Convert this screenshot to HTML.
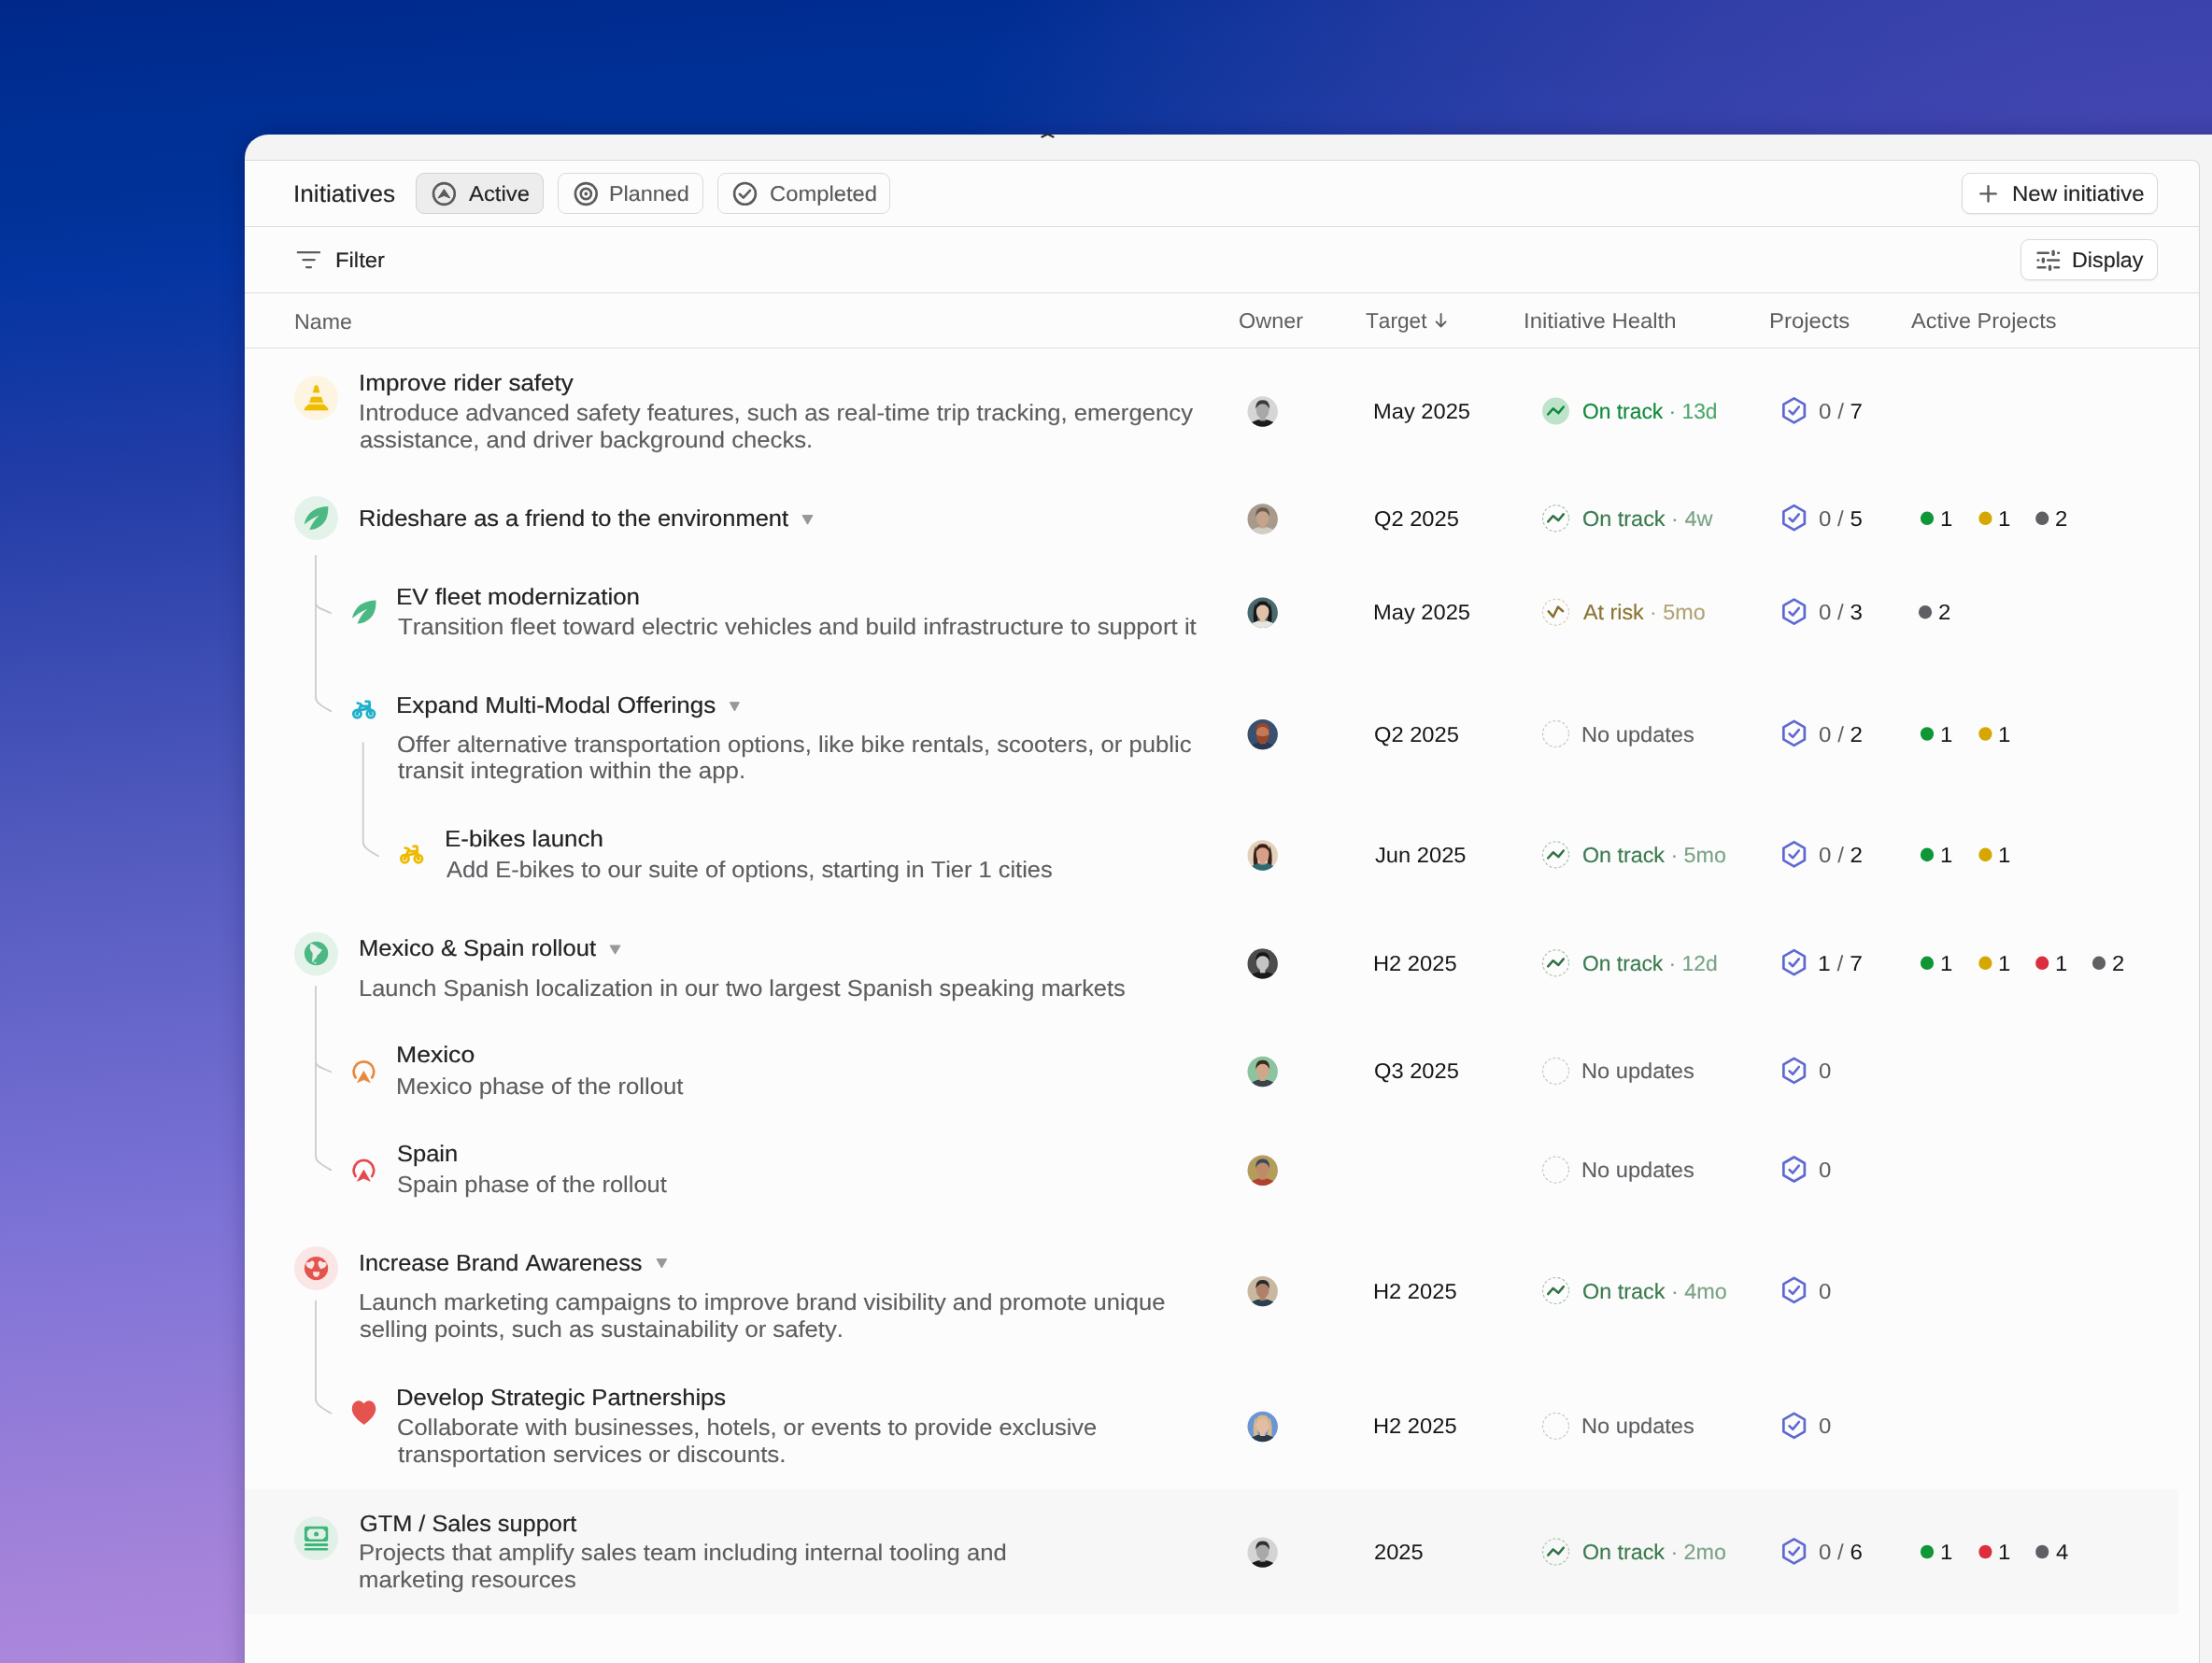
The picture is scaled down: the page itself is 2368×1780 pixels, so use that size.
<!DOCTYPE html>
<html><head><meta charset="utf-8"><style>
html,body{margin:0;padding:0;}
body{width:2368px;height:1780px;overflow:hidden;position:relative;background:radial-gradient(1400px 900px at 2400px 300px, rgba(84,74,180,0.85) 0%, rgba(84,74,180,0.72) 30%, rgba(84,74,180,0.6) 50%, rgba(84,74,180,0.4) 70%, rgba(84,74,180,0.14) 90%, rgba(84,74,180,0) 100%), linear-gradient(175deg, #00288a 0%, #003096 7.7%, #003196 10.5%, #0535a2 15.6%, #213ca6 25.6%, #525abe 45.7%, #7c72d6 65.9%, #a684da 86%, #b890e0 100%);font-family:"Liberation Sans",sans-serif;}
.t{position:absolute;white-space:pre;line-height:1;font-kerning:none;font-variant-ligatures:none;text-rendering:geometricPrecision;}
#root{position:absolute;left:0;top:0;width:2368px;height:1780px;overflow:hidden;will-change:transform;}
svg{position:absolute;left:0;top:0;}
</style></head><body><div id="root">
<div style="position:absolute;left:262px;top:144px;width:2200px;height:1800px;background:#f4f4f4;border-top-left-radius:25px;box-shadow:0 0 24px rgba(10,10,60,0.28)"></div>
<div style="position:absolute;left:262px;top:171px;width:2092px;height:1700px;background:#fcfcfc;border-top:1px solid #d8d8d8;border-right:1px solid #d6d6d6;border-top-right-radius:8px"></div>
<div style="position:absolute;left:262px;top:242px;width:2092px;height:1px;background:#dedede"></div>
<div style="position:absolute;left:262px;top:313px;width:2092px;height:1px;background:#dedede"></div>
<div style="position:absolute;left:262px;top:372px;width:2092px;height:1px;background:#dedede"></div>
<div style="position:absolute;left:262px;top:1593.7px;width:2070px;height:134px;background:#f7f7f7"></div>
<div class="t" style="left:314.38px;top:196.00px;font-size:25.4px;color:#232326;letter-spacing:0.000px;transform:scaleX(1.0310);transform-origin:0 0;-webkit-text-stroke:0.15px currentColor;">Initiatives</div>
<div style="position:absolute;left:445px;top:185px;width:137px;height:44px;box-sizing:border-box;background:#ededed;border:1.5px solid #d2d2d2;border-radius:9px;"></div>
<div style="position:absolute;left:597px;top:185px;width:156px;height:44px;box-sizing:border-box;background:#fcfcfc;border:1.5px solid #dadada;border-radius:9px;"></div>
<div style="position:absolute;left:768px;top:185px;width:185px;height:44px;box-sizing:border-box;background:#fcfcfc;border:1.5px solid #dadada;border-radius:9px;"></div>
<div style="position:absolute;left:2100px;top:185px;width:210px;height:43.5px;box-sizing:border-box;background:#ffffff;border:1.5px solid #d9d9d9;border-radius:9px;box-shadow:0 1px 2px rgba(0,0,0,0.06)"></div>
<div style="position:absolute;left:2163px;top:256px;width:147px;height:43.5px;box-sizing:border-box;background:#ffffff;border:1.5px solid #d9d9d9;border-radius:9px;box-shadow:0 1px 2px rgba(0,0,0,0.06)"></div>
<div class="t" style="left:502.25px;top:196.00px;font-size:22.8px;color:#232326;letter-spacing:0.000px;transform:scaleX(1.0470);transform-origin:0 0;-webkit-text-stroke:0.15px currentColor;">Active</div>
<div class="t" style="left:652.28px;top:196.00px;font-size:22.8px;color:#5a5a5d;letter-spacing:0.000px;transform:scaleX(1.0257);transform-origin:0 0;-webkit-text-stroke:0.15px currentColor;">Planned</div>
<div class="t" style="left:823.79px;top:196.00px;font-size:22.8px;color:#5a5a5d;letter-spacing:0.000px;transform:scaleX(1.0424);transform-origin:0 0;-webkit-text-stroke:0.15px currentColor;">Completed</div>
<div class="t" style="left:2153.83px;top:196.00px;font-size:23px;color:#232326;letter-spacing:0.000px;transform:scaleX(1.0446);transform-origin:0 0;-webkit-text-stroke:0.15px currentColor;">New initiative</div>
<div class="t" style="left:359.25px;top:267.00px;font-size:22.7px;color:#232326;letter-spacing:0.000px;transform:scaleX(1.0497);transform-origin:0 0;-webkit-text-stroke:0.15px currentColor;">Filter</div>
<div class="t" style="left:2217.89px;top:267.00px;font-size:23px;color:#232326;letter-spacing:0.000px;transform:scaleX(1.0139);transform-origin:0 0;-webkit-text-stroke:0.15px currentColor;">Display</div>
<div class="t" style="left:315.30px;top:333.00px;font-size:22.8px;color:#5e5e62;letter-spacing:0.000px;transform:scaleX(1.0167);transform-origin:0 0;">Name</div>
<div class="t" style="left:1326.29px;top:332.00px;font-size:22.8px;color:#5e5e62;letter-spacing:0.000px;transform:scaleX(1.0275);transform-origin:0 0;">Owner</div>
<div class="t" style="left:1462.49px;top:332.00px;font-size:22.8px;color:#5e5e62;letter-spacing:0.000px;transform:scaleX(0.9936);transform-origin:0 0;">Target</div>
<div class="t" style="left:1630.89px;top:332.00px;font-size:22.8px;color:#5e5e62;letter-spacing:0.000px;transform:scaleX(1.0493);transform-origin:0 0;">Initiative Health</div>
<div class="t" style="left:1894.34px;top:332.00px;font-size:22.8px;color:#5e5e62;letter-spacing:0.000px;transform:scaleX(1.0481);transform-origin:0 0;">Projects</div>
<div class="t" style="left:2045.95px;top:332.00px;font-size:22.8px;color:#5e5e62;letter-spacing:0.000px;transform:scaleX(1.0313);transform-origin:0 0;">Active Projects</div>
<div class="t" style="left:383.60px;top:399.00px;font-size:24.5px;color:#232326;letter-spacing:0.000px;transform:scaleX(1.0612);transform-origin:0 0;-webkit-text-stroke:0.2px currentColor;">Improve rider safety</div>
<div class="t" style="left:383.63px;top:431.00px;font-size:24.5px;color:#5d5d60;letter-spacing:0.000px;transform:scaleX(1.0492);transform-origin:0 0;-webkit-text-stroke:0.12px currentColor;">Introduce advanced safety features, such as real-time trip tracking, emergency</div>
<div class="t" style="left:384.91px;top:460.00px;font-size:24.5px;color:#5d5d60;letter-spacing:0.000px;transform:scaleX(1.0480);transform-origin:0 0;-webkit-text-stroke:0.12px currentColor;">assistance, and driver background checks.</div>
<div class="t" style="left:1470.06px;top:429.00px;font-size:23.0px;color:#161618;letter-spacing:0.000px;transform:scaleX(1.0300);transform-origin:0 0;">May 2025</div>
<div class="t" style="left:1694.22px;top:429.00px;font-size:23.0px;color:#0f8a3b;letter-spacing:0.000px;transform:scaleX(0.9919);transform-origin:0 0;-webkit-text-stroke:0.15px currentColor;"><span style="color:#0f8a3b">On track</span><span style="color:#4ea86c"> · 13d</span></div>
<div class="t" style="left:1946.66px;top:429.00px;font-size:23.0px;color:#5e5e62;letter-spacing:0.000px;transform:scaleX(1.0492);transform-origin:0 0;"><span style="color:#5e5e62">0</span><span style="color:#5e5e62"> / </span><span style="color:#161618">7</span></div>
<div class="t" style="left:383.91px;top:544.00px;font-size:24.5px;color:#232326;letter-spacing:0.000px;transform:scaleX(1.0394);transform-origin:0 0;-webkit-text-stroke:0.2px currentColor;">Rideshare as a friend to the environment</div>
<div class="t" style="left:1470.88px;top:544.00px;font-size:23.0px;color:#161618;letter-spacing:0.000px;transform:scaleX(1.0300);transform-origin:0 0;">Q2 2025</div>
<div class="t" style="left:1694.19px;top:544.00px;font-size:23.0px;color:#3a7a4e;letter-spacing:0.000px;transform:scaleX(1.0190);transform-origin:0 0;-webkit-text-stroke:0.15px currentColor;"><span style="color:#3a7a4e">On track</span><span style="color:#7aa386"> · 4w</span></div>
<div class="t" style="left:1946.66px;top:544.00px;font-size:23.0px;color:#5e5e62;letter-spacing:0.000px;transform:scaleX(1.0446);transform-origin:0 0;"><span style="color:#5e5e62">0</span><span style="color:#5e5e62"> / </span><span style="color:#161618">5</span></div>
<div class="t" style="left:2076.58px;top:544.00px;font-size:23.0px;color:#161618;letter-spacing:0.000px;transform:scaleX(1.0400);transform-origin:0 0;">1</div>
<div class="t" style="left:2138.98px;top:544.00px;font-size:23.0px;color:#161618;letter-spacing:0.000px;transform:scaleX(1.0400);transform-origin:0 0;">1</div>
<div class="t" style="left:2200.40px;top:544.00px;font-size:23.0px;color:#161618;letter-spacing:0.000px;transform:scaleX(1.0400);transform-origin:0 0;">2</div>
<div class="t" style="left:423.97px;top:628.00px;font-size:24.5px;color:#232326;letter-spacing:0.000px;transform:scaleX(1.0589);transform-origin:0 0;-webkit-text-stroke:0.2px currentColor;">EV fleet modernization</div>
<div class="t" style="left:425.52px;top:660.00px;font-size:24.5px;color:#5d5d60;letter-spacing:0.000px;transform:scaleX(1.0532);transform-origin:0 0;-webkit-text-stroke:0.12px currentColor;">Transition fleet toward electric vehicles and build infrastructure to support it</div>
<div class="t" style="left:1470.06px;top:644.00px;font-size:23.0px;color:#161618;letter-spacing:0.000px;transform:scaleX(1.0300);transform-origin:0 0;">May 2025</div>
<div class="t" style="left:1695.25px;top:644.00px;font-size:23.0px;color:#8a7434;letter-spacing:0.000px;transform:scaleX(1.0120);transform-origin:0 0;-webkit-text-stroke:0.15px currentColor;"><span style="color:#8a7434">At risk</span><span style="color:#b2a375"> · 5mo</span></div>
<div class="t" style="left:1946.66px;top:644.00px;font-size:23.0px;color:#5e5e62;letter-spacing:0.000px;transform:scaleX(1.0456);transform-origin:0 0;"><span style="color:#5e5e62">0</span><span style="color:#5e5e62"> / </span><span style="color:#161618">3</span></div>
<div class="t" style="left:2075.20px;top:644.00px;font-size:23.0px;color:#161618;letter-spacing:0.000px;transform:scaleX(1.0400);transform-origin:0 0;">2</div>
<div class="t" style="left:423.97px;top:744.00px;font-size:24.5px;color:#232326;letter-spacing:0.000px;transform:scaleX(1.0603);transform-origin:0 0;-webkit-text-stroke:0.2px currentColor;">Expand Multi-Modal Offerings</div>
<div class="t" style="left:424.88px;top:786.00px;font-size:24.5px;color:#5d5d60;letter-spacing:0.000px;transform:scaleX(1.0479);transform-origin:0 0;-webkit-text-stroke:0.12px currentColor;">Offer alternative transportation options, like bike rentals, scooters, or public</div>
<div class="t" style="left:425.71px;top:814.00px;font-size:24.5px;color:#5d5d60;letter-spacing:0.000px;transform:scaleX(1.0550);transform-origin:0 0;-webkit-text-stroke:0.12px currentColor;">transit integration within the app.</div>
<div class="t" style="left:1470.88px;top:775.00px;font-size:23.0px;color:#161618;letter-spacing:0.000px;transform:scaleX(1.0300);transform-origin:0 0;">Q2 2025</div>
<div class="t" style="left:1693.36px;top:775.00px;font-size:23.0px;color:#5e5e62;letter-spacing:0.000px;transform:scaleX(1.0268);transform-origin:0 0;-webkit-text-stroke:0.1px currentColor;">No updates</div>
<div class="t" style="left:1946.66px;top:775.00px;font-size:23.0px;color:#5e5e62;letter-spacing:0.000px;transform:scaleX(1.0492);transform-origin:0 0;"><span style="color:#5e5e62">0</span><span style="color:#5e5e62"> / </span><span style="color:#161618">2</span></div>
<div class="t" style="left:2076.58px;top:775.00px;font-size:23.0px;color:#161618;letter-spacing:0.000px;transform:scaleX(1.0400);transform-origin:0 0;">1</div>
<div class="t" style="left:2138.98px;top:775.00px;font-size:23.0px;color:#161618;letter-spacing:0.000px;transform:scaleX(1.0400);transform-origin:0 0;">1</div>
<div class="t" style="left:475.58px;top:887.00px;font-size:24.5px;color:#232326;letter-spacing:0.000px;transform:scaleX(1.0567);transform-origin:0 0;-webkit-text-stroke:0.2px currentColor;">E-bikes launch</div>
<div class="t" style="left:477.65px;top:920.00px;font-size:24.5px;color:#5d5d60;letter-spacing:0.000px;transform:scaleX(1.0378);transform-origin:0 0;-webkit-text-stroke:0.12px currentColor;">Add E-bikes to our suite of options, starting in Tier 1 cities</div>
<div class="t" style="left:1471.63px;top:904.00px;font-size:23.0px;color:#161618;letter-spacing:0.000px;transform:scaleX(1.0300);transform-origin:0 0;">Jun 2025</div>
<div class="t" style="left:1694.20px;top:904.00px;font-size:23.0px;color:#3a7a4e;letter-spacing:0.000px;transform:scaleX(1.0117);transform-origin:0 0;-webkit-text-stroke:0.15px currentColor;"><span style="color:#3a7a4e">On track</span><span style="color:#7aa386"> · 5mo</span></div>
<div class="t" style="left:1946.66px;top:904.00px;font-size:23.0px;color:#5e5e62;letter-spacing:0.000px;transform:scaleX(1.0492);transform-origin:0 0;"><span style="color:#5e5e62">0</span><span style="color:#5e5e62"> / </span><span style="color:#161618">2</span></div>
<div class="t" style="left:2076.58px;top:904.00px;font-size:23.0px;color:#161618;letter-spacing:0.000px;transform:scaleX(1.0400);transform-origin:0 0;">1</div>
<div class="t" style="left:2138.98px;top:904.00px;font-size:23.0px;color:#161618;letter-spacing:0.000px;transform:scaleX(1.0400);transform-origin:0 0;">1</div>
<div class="t" style="left:383.91px;top:1004.00px;font-size:24.5px;color:#232326;letter-spacing:0.000px;transform:scaleX(1.0419);transform-origin:0 0;-webkit-text-stroke:0.2px currentColor;">Mexico &amp; Spain rollout</div>
<div class="t" style="left:383.92px;top:1047.00px;font-size:24.5px;color:#5d5d60;letter-spacing:0.000px;transform:scaleX(1.0373);transform-origin:0 0;-webkit-text-stroke:0.12px currentColor;">Launch Spanish localization in our two largest Spanish speaking markets</div>
<div class="t" style="left:1470.06px;top:1020.00px;font-size:23.0px;color:#161618;letter-spacing:0.000px;transform:scaleX(1.0300);transform-origin:0 0;">H2 2025</div>
<div class="t" style="left:1694.22px;top:1020.00px;font-size:23.0px;color:#3a7a4e;letter-spacing:0.000px;transform:scaleX(0.9926);transform-origin:0 0;-webkit-text-stroke:0.15px currentColor;"><span style="color:#3a7a4e">On track</span><span style="color:#7aa386"> · 12d</span></div>
<div class="t" style="left:1945.72px;top:1020.00px;font-size:23.0px;color:#161618;letter-spacing:0.000px;transform:scaleX(1.0706);transform-origin:0 0;"><span style="color:#161618">1</span><span style="color:#5e5e62"> / </span><span style="color:#161618">7</span></div>
<div class="t" style="left:2076.58px;top:1020.00px;font-size:23.0px;color:#161618;letter-spacing:0.000px;transform:scaleX(1.0400);transform-origin:0 0;">1</div>
<div class="t" style="left:2138.98px;top:1020.00px;font-size:23.0px;color:#161618;letter-spacing:0.000px;transform:scaleX(1.0400);transform-origin:0 0;">1</div>
<div class="t" style="left:2199.78px;top:1020.00px;font-size:23.0px;color:#161618;letter-spacing:0.000px;transform:scaleX(1.0400);transform-origin:0 0;">1</div>
<div class="t" style="left:2261.20px;top:1020.00px;font-size:23.0px;color:#161618;letter-spacing:0.000px;transform:scaleX(1.0400);transform-origin:0 0;">2</div>
<div class="t" style="left:423.92px;top:1118.00px;font-size:24.5px;color:#232326;letter-spacing:0.000px;transform:scaleX(1.0850);transform-origin:0 0;-webkit-text-stroke:0.2px currentColor;">Mexico</div>
<div class="t" style="left:423.99px;top:1152.00px;font-size:24.5px;color:#5d5d60;letter-spacing:0.000px;transform:scaleX(1.0502);transform-origin:0 0;-webkit-text-stroke:0.12px currentColor;">Mexico phase of the rollout</div>
<div class="t" style="left:1470.88px;top:1135.00px;font-size:23.0px;color:#161618;letter-spacing:0.000px;transform:scaleX(1.0300);transform-origin:0 0;">Q3 2025</div>
<div class="t" style="left:1693.36px;top:1135.00px;font-size:23.0px;color:#5e5e62;letter-spacing:0.000px;transform:scaleX(1.0268);transform-origin:0 0;-webkit-text-stroke:0.1px currentColor;">No updates</div>
<div class="t" style="left:1946.66px;top:1135.00px;font-size:23.0px;color:#5e5e62;letter-spacing:0.000px;transform:scaleX(1.0450);transform-origin:0 0;">0</div>
<div class="t" style="left:424.94px;top:1224.00px;font-size:24.5px;color:#232326;letter-spacing:0.000px;transform:scaleX(1.0407);transform-origin:0 0;-webkit-text-stroke:0.2px currentColor;">Spain</div>
<div class="t" style="left:424.94px;top:1257.00px;font-size:24.5px;color:#5d5d60;letter-spacing:0.000px;transform:scaleX(1.0395);transform-origin:0 0;-webkit-text-stroke:0.12px currentColor;">Spain phase of the rollout</div>
<div class="t" style="left:1693.36px;top:1241.00px;font-size:23.0px;color:#5e5e62;letter-spacing:0.000px;transform:scaleX(1.0268);transform-origin:0 0;-webkit-text-stroke:0.1px currentColor;">No updates</div>
<div class="t" style="left:1946.66px;top:1241.00px;font-size:23.0px;color:#5e5e62;letter-spacing:0.000px;transform:scaleX(1.0450);transform-origin:0 0;">0</div>
<div class="t" style="left:383.67px;top:1341.00px;font-size:24.5px;color:#232326;letter-spacing:0.000px;transform:scaleX(1.0316);transform-origin:0 0;-webkit-text-stroke:0.2px currentColor;">Increase Brand Awareness</div>
<div class="t" style="left:383.90px;top:1383.00px;font-size:24.5px;color:#5d5d60;letter-spacing:0.000px;transform:scaleX(1.0445);transform-origin:0 0;-webkit-text-stroke:0.12px currentColor;">Launch marketing campaigns to improve brand visibility and promote unique</div>
<div class="t" style="left:385.29px;top:1412.00px;font-size:24.5px;color:#5d5d60;letter-spacing:0.000px;transform:scaleX(1.0478);transform-origin:0 0;-webkit-text-stroke:0.12px currentColor;">selling points, such as sustainability or safety.</div>
<div class="t" style="left:1470.06px;top:1371.00px;font-size:23.0px;color:#161618;letter-spacing:0.000px;transform:scaleX(1.0300);transform-origin:0 0;">H2 2025</div>
<div class="t" style="left:1694.19px;top:1371.00px;font-size:23.0px;color:#3a7a4e;letter-spacing:0.000px;transform:scaleX(1.0177);transform-origin:0 0;-webkit-text-stroke:0.15px currentColor;"><span style="color:#3a7a4e">On track</span><span style="color:#7aa386"> · 4mo</span></div>
<div class="t" style="left:1946.66px;top:1371.00px;font-size:23.0px;color:#5e5e62;letter-spacing:0.000px;transform:scaleX(1.0450);transform-origin:0 0;">0</div>
<div class="t" style="left:424.30px;top:1485.00px;font-size:24.5px;color:#232326;letter-spacing:0.000px;transform:scaleX(1.0456);transform-origin:0 0;-webkit-text-stroke:0.2px currentColor;">Develop Strategic Partnerships</div>
<div class="t" style="left:425.11px;top:1517.00px;font-size:24.5px;color:#5d5d60;letter-spacing:0.000px;transform:scaleX(1.0400);transform-origin:0 0;-webkit-text-stroke:0.12px currentColor;">Collaborate with businesses, hotels, or events to provide exclusive</div>
<div class="t" style="left:426.01px;top:1546.00px;font-size:24.5px;color:#5d5d60;letter-spacing:0.000px;transform:scaleX(1.0596);transform-origin:0 0;-webkit-text-stroke:0.12px currentColor;">transportation services or discounts.</div>
<div class="t" style="left:1470.06px;top:1515.00px;font-size:23.0px;color:#161618;letter-spacing:0.000px;transform:scaleX(1.0300);transform-origin:0 0;">H2 2025</div>
<div class="t" style="left:1693.36px;top:1515.00px;font-size:23.0px;color:#5e5e62;letter-spacing:0.000px;transform:scaleX(1.0268);transform-origin:0 0;-webkit-text-stroke:0.1px currentColor;">No updates</div>
<div class="t" style="left:1946.66px;top:1515.00px;font-size:23.0px;color:#5e5e62;letter-spacing:0.000px;transform:scaleX(1.0450);transform-origin:0 0;">0</div>
<div class="t" style="left:384.73px;top:1620.00px;font-size:24.5px;color:#232326;letter-spacing:0.000px;transform:scaleX(1.0343);transform-origin:0 0;-webkit-text-stroke:0.2px currentColor;">GTM / Sales support</div>
<div class="t" style="left:383.90px;top:1651.00px;font-size:24.5px;color:#5d5d60;letter-spacing:0.000px;transform:scaleX(1.0460);transform-origin:0 0;-webkit-text-stroke:0.12px currentColor;">Projects that amplify sales team including internal tooling and</div>
<div class="t" style="left:384.29px;top:1680.00px;font-size:24.5px;color:#5d5d60;letter-spacing:0.000px;transform:scaleX(1.0486);transform-origin:0 0;-webkit-text-stroke:0.12px currentColor;">marketing resources</div>
<div class="t" style="left:1470.81px;top:1650.00px;font-size:23.0px;color:#161618;letter-spacing:0.000px;transform:scaleX(1.0300);transform-origin:0 0;">2025</div>
<div class="t" style="left:1694.20px;top:1650.00px;font-size:23.0px;color:#3a7a4e;letter-spacing:0.000px;transform:scaleX(1.0117);transform-origin:0 0;-webkit-text-stroke:0.15px currentColor;"><span style="color:#3a7a4e">On track</span><span style="color:#7aa386"> · 2mo</span></div>
<div class="t" style="left:1946.66px;top:1650.00px;font-size:23.0px;color:#5e5e62;letter-spacing:0.000px;transform:scaleX(1.0456);transform-origin:0 0;"><span style="color:#5e5e62">0</span><span style="color:#5e5e62"> / </span><span style="color:#161618">6</span></div>
<div class="t" style="left:2076.58px;top:1650.00px;font-size:23.0px;color:#161618;letter-spacing:0.000px;transform:scaleX(1.0400);transform-origin:0 0;">1</div>
<div class="t" style="left:2138.98px;top:1650.00px;font-size:23.0px;color:#161618;letter-spacing:0.000px;transform:scaleX(1.0400);transform-origin:0 0;">1</div>
<div class="t" style="left:2201.05px;top:1650.00px;font-size:23.0px;color:#161618;letter-spacing:0.000px;transform:scaleX(1.0400);transform-origin:0 0;">4</div>
<svg width="2368" height="1780" viewBox="0 0 2368 1780">
<circle cx="475.4" cy="207.5" r="11.4" fill="none" stroke="#5c5c5f" stroke-width="2.6"/>
<path d="M475.4,202.6 L481.8,212 L475.4,209.4 L469,212 Z" fill="#5c5c5f" stroke="#5c5c5f" stroke-width="1" stroke-linejoin="round"/>
<circle cx="627.3" cy="207.5" r="11.4" fill="none" stroke="#5c5c5f" stroke-width="2.6"/>
<circle cx="627.3" cy="207.5" r="5.6" fill="none" stroke="#5c5c5f" stroke-width="2.6"/>
<circle cx="627.3" cy="207.5" r="1.9" fill="#5c5c5f"/>
<circle cx="797.5" cy="207.4" r="11.4" fill="none" stroke="#5c5c5f" stroke-width="2.6"/>
<path d="M791.8,207.8 L795.8,211.6 L803,203.8" fill="none" stroke="#5c5c5f" stroke-width="2.6" stroke-linecap="round" stroke-linejoin="round"/>
<path d="M2128.5,199.2 V215.6 M2120.3,207.4 H2136.7" stroke="#5c5c5f" stroke-width="2.4" stroke-linecap="round"/>
<path d="M318.8,270.2 H342 M324.5,278.2 H336.6 M328,286.1 H333" stroke="#5c5c5f" stroke-width="2.3" stroke-linecap="round"/>
<path d="M2181.6,270.7 H2192.8 M2203.2,270.7 H2204 M2181.6,278.4 H2182.2 M2192.2,278.4 H2204 M2181.6,286.2 H2189.5 M2199.5,286.2 H2204" stroke="#5c5c5f" stroke-width="2.5" stroke-linecap="round"/>
<path d="M2198.1,269.2 V272.4 M2187.3,277.2 V280 M2194.5,285.2 V288.3" stroke="#5c5c5f" stroke-width="3.4" stroke-linecap="round"/>
<path d="M1115.5,146.5 L1121.5,143.6 L1127.5,146.5" fill="none" stroke="#2a2a2a" stroke-width="2.2" stroke-linecap="round"/>
<path d="M1542.6,336 V349.5 M1537.6,344.4 L1542.6,349.5 L1547.6,344.4" fill="none" stroke="#5e5e62" stroke-width="1.9" stroke-linecap="round" stroke-linejoin="round"/>
<clipPath id="av0"><circle cx="1351.7" cy="440.5" r="16.2"/></clipPath><g clip-path="url(#av0)"><rect x="1334.7" y="423.5" width="34" height="34" fill="#d6d6d6"/><ellipse cx="1351.7" cy="457.5" rx="15" ry="8.5" fill="#1c1c1c"/><rect x="1348.9" y="444.5" width="5.6" height="6" fill="#a8a8a8"/><ellipse cx="1351.7" cy="439.3" rx="6.8" ry="8.6" fill="#a8a8a8"/><path d="M1344.3,438.0 Q1343.9,428.0 1351.7,428.3 Q1359.5,428.0 1359.1000000000001,438.0 Q1356.7,432.3 1351.7,432.3 Q1346.7,432.3 1344.3,438.0 Z" fill="#3a3a3a"/></g>
<circle cx="1665.5" cy="439.9" r="14.5" fill="#bfe3ca"/>
<path d="M1657.2,443.5 L1662.7,437.29999999999995 L1668.3,442.09999999999997 L1673.8,435.5" fill="none" stroke="#0b8a3b" stroke-width="2.5" stroke-linecap="round" stroke-linejoin="round"/>
<polygon points="1920.60,426.30 1931.86,432.80 1931.86,445.80 1920.60,452.30 1909.34,445.80 1909.34,432.80" fill="none" stroke="#5e6ad2" stroke-width="2.7" stroke-linejoin="round"/>
<path d="M1915.6,439.9 L1919.1999999999998,443.29999999999995 L1925.8,435.49999999999994" fill="none" stroke="#5e6ad2" stroke-width="2.6" stroke-linecap="round" stroke-linejoin="round"/>
<path d="M859,551.6 L870,551.6 L864.5,561.2 Z" fill="#98989b" stroke="#98989b" stroke-width="1" stroke-linejoin="round"/>
<clipPath id="av1"><circle cx="1351.7" cy="555.4" r="16.2"/></clipPath><g clip-path="url(#av1)"><rect x="1334.7" y="538.4" width="34" height="34" fill="#a89a8a"/><ellipse cx="1351.7" cy="572.4" rx="15" ry="8.5" fill="#d2cec6"/><rect x="1348.9" y="559.4" width="5.6" height="6" fill="#c4a48c"/><ellipse cx="1351.7" cy="554.1999999999999" rx="6.8" ry="8.6" fill="#c4a48c"/><path d="M1344.3,552.9 Q1343.9,542.9 1351.7,543.1999999999999 Q1359.5,542.9 1359.1000000000001,552.9 Q1356.7,547.1999999999999 1351.7,547.1999999999999 Q1346.7,547.1999999999999 1344.3,552.9 Z" fill="#6a5a4e"/></g>
<circle cx="1665.5" cy="554.8" r="14" fill="none" stroke="#a8c4ae" stroke-width="1.2" stroke-dasharray="3 2.2"/>
<path d="M1657.2,558.4 L1662.7,552.1999999999999 L1668.3,557.0 L1673.8,550.4" fill="none" stroke="#2f7145" stroke-width="2.5" stroke-linecap="round" stroke-linejoin="round"/>
<polygon points="1920.60,541.20 1931.86,547.70 1931.86,560.70 1920.60,567.20 1909.34,560.70 1909.34,547.70" fill="none" stroke="#5e6ad2" stroke-width="2.7" stroke-linejoin="round"/>
<path d="M1915.6,554.8 L1919.1999999999998,558.1999999999999 L1925.8,550.4" fill="none" stroke="#5e6ad2" stroke-width="2.6" stroke-linecap="round" stroke-linejoin="round"/>
<ellipse cx="2063" cy="554.8" rx="7.1" ry="7.3" fill="#0e9637"/>
<ellipse cx="2125.4" cy="554.8" rx="7.1" ry="7.3" fill="#d5a700"/>
<ellipse cx="2186.2" cy="554.8" rx="7.1" ry="7.3" fill="#606064"/>
<clipPath id="av2"><circle cx="1351.7" cy="655.8000000000001" r="16.2"/></clipPath><g clip-path="url(#av2)"><rect x="1334.7" y="638.8000000000001" width="34" height="34" fill="#4a686e"/><path d="M1342.2,666.8000000000001 Q1340.7,652.8000000000001 1344.2,645.8000000000001 L1346.7,664.8000000000001 Z M1361.2,666.8000000000001 Q1362.7,652.8000000000001 1359.2,645.8000000000001 L1356.7,664.8000000000001 Z" fill="#161616"/><ellipse cx="1351.7" cy="672.8000000000001" rx="15" ry="8.5" fill="#e8e4de"/><rect x="1348.9" y="659.8000000000001" width="5.6" height="6" fill="#e0c2aa"/><ellipse cx="1351.7" cy="654.6" rx="6.8" ry="8.6" fill="#e0c2aa"/><path d="M1344.3,653.3000000000001 Q1343.9,643.3000000000001 1351.7,643.6 Q1359.5,643.3000000000001 1359.1000000000001,653.3000000000001 Q1356.7,647.6 1351.7,647.6 Q1346.7,647.6 1344.3,653.3000000000001 Z" fill="#161616"/></g>
<circle cx="1665.5" cy="655.2" r="14" fill="none" stroke="#dccfae" stroke-width="1.2" stroke-dasharray="3 2.2"/>
<path d="M1657.7,654.4000000000001 L1662.7,660.2 L1667.9,649.6 L1673.1,654.2" fill="none" stroke="#85702f" stroke-width="2.5" stroke-linecap="round" stroke-linejoin="round"/>
<polygon points="1920.60,641.60 1931.86,648.10 1931.86,661.10 1920.60,667.60 1909.34,661.10 1909.34,648.10" fill="none" stroke="#5e6ad2" stroke-width="2.7" stroke-linejoin="round"/>
<path d="M1915.6,655.2 L1919.1999999999998,658.6 L1925.8,650.8000000000001" fill="none" stroke="#5e6ad2" stroke-width="2.6" stroke-linecap="round" stroke-linejoin="round"/>
<ellipse cx="2061" cy="655.2" rx="7.1" ry="7.3" fill="#606064"/>
<path d="M781.4,751.8 L791.4,751.8 L786.4,761 Z" fill="#98989b" stroke="#98989b" stroke-width="1" stroke-linejoin="round"/>
<clipPath id="av3"><circle cx="1351.7" cy="786.1" r="16.2"/></clipPath><g clip-path="url(#av3)"><rect x="1334.7" y="769.1" width="34" height="34" fill="#3a5070"/><ellipse cx="1351.7" cy="803.1" rx="15" ry="8.5" fill="#2a3a55"/><rect x="1348.9" y="790.1" width="5.6" height="6" fill="#c07a58"/><ellipse cx="1351.7" cy="784.9" rx="6.8" ry="8.6" fill="#c07a58"/><path d="M1344.9,786.6 Q1345.2,795.6 1351.7,796.1 Q1358.2,795.6 1358.5,786.6 Q1351.7,790.1 1344.9,786.6 Z" fill="#9a4628"/><path d="M1344.3,783.6 Q1343.9,773.6 1351.7,773.9 Q1359.5,773.6 1359.1000000000001,783.6 Q1356.7,777.9 1351.7,777.9 Q1346.7,777.9 1344.3,783.6 Z" fill="#9a4628"/></g>
<circle cx="1665.5" cy="785.5" r="14" fill="none" stroke="#c6c6c8" stroke-width="1.2" stroke-dasharray="3 2.2"/>
<polygon points="1920.60,771.90 1931.86,778.40 1931.86,791.40 1920.60,797.90 1909.34,791.40 1909.34,778.40" fill="none" stroke="#5e6ad2" stroke-width="2.7" stroke-linejoin="round"/>
<path d="M1915.6,785.5 L1919.1999999999998,788.9 L1925.8,781.1" fill="none" stroke="#5e6ad2" stroke-width="2.6" stroke-linecap="round" stroke-linejoin="round"/>
<ellipse cx="2063" cy="785.5" rx="7.1" ry="7.3" fill="#0e9637"/>
<ellipse cx="2125.4" cy="785.5" rx="7.1" ry="7.3" fill="#d5a700"/>
<clipPath id="av4"><circle cx="1351.7" cy="915.5" r="16.2"/></clipPath><g clip-path="url(#av4)"><rect x="1334.7" y="898.5" width="34" height="34" fill="#e2d2ba"/><path d="M1342.2,926.5 Q1340.7,912.5 1344.2,905.5 L1346.7,924.5 Z M1361.2,926.5 Q1362.7,912.5 1359.2,905.5 L1356.7,924.5 Z" fill="#3a2018"/><ellipse cx="1351.7" cy="932.5" rx="15" ry="8.5" fill="#2a6a70"/><rect x="1348.9" y="919.5" width="5.6" height="6" fill="#d6a088"/><ellipse cx="1351.7" cy="914.3" rx="6.8" ry="8.6" fill="#d6a088"/><path d="M1344.3,913.0 Q1343.9,903.0 1351.7,903.3 Q1359.5,903.0 1359.1000000000001,913.0 Q1356.7,907.3 1351.7,907.3 Q1346.7,907.3 1344.3,913.0 Z" fill="#3a2018"/></g>
<circle cx="1665.5" cy="914.9" r="14" fill="none" stroke="#a8c4ae" stroke-width="1.2" stroke-dasharray="3 2.2"/>
<path d="M1657.2,918.5 L1662.7,912.3 L1668.3,917.1 L1673.8,910.5" fill="none" stroke="#2f7145" stroke-width="2.5" stroke-linecap="round" stroke-linejoin="round"/>
<polygon points="1920.60,901.30 1931.86,907.80 1931.86,920.80 1920.60,927.30 1909.34,920.80 1909.34,907.80" fill="none" stroke="#5e6ad2" stroke-width="2.7" stroke-linejoin="round"/>
<path d="M1915.6,914.9 L1919.1999999999998,918.3 L1925.8,910.5" fill="none" stroke="#5e6ad2" stroke-width="2.6" stroke-linecap="round" stroke-linejoin="round"/>
<ellipse cx="2063" cy="914.9" rx="7.1" ry="7.3" fill="#0e9637"/>
<ellipse cx="2125.4" cy="914.9" rx="7.1" ry="7.3" fill="#d5a700"/>
<path d="M653,1012 L664,1012 L658.5,1021.2 Z" fill="#98989b" stroke="#98989b" stroke-width="1" stroke-linejoin="round"/>
<clipPath id="av5"><circle cx="1351.7" cy="1031.3999999999999" r="16.2"/></clipPath><g clip-path="url(#av5)"><rect x="1334.7" y="1014.3999999999999" width="34" height="34" fill="#4c4c4c"/><ellipse cx="1351.7" cy="1048.3999999999999" rx="15" ry="8.5" fill="#1a1a1a"/><rect x="1348.9" y="1035.3999999999999" width="5.6" height="6" fill="#c4c4c4"/><ellipse cx="1351.7" cy="1030.1999999999998" rx="6.8" ry="8.6" fill="#c4c4c4"/><path d="M1344.3,1028.8999999999999 Q1343.9,1018.8999999999999 1351.7,1019.1999999999998 Q1359.5,1018.8999999999999 1359.1000000000001,1028.8999999999999 Q1356.7,1023.1999999999998 1351.7,1023.1999999999998 Q1346.7,1023.1999999999998 1344.3,1028.8999999999999 Z" fill="#161616"/></g>
<circle cx="1665.5" cy="1030.8" r="14" fill="none" stroke="#a8c4ae" stroke-width="1.2" stroke-dasharray="3 2.2"/>
<path d="M1657.2,1034.3999999999999 L1662.7,1028.2 L1668.3,1033.0 L1673.8,1026.3999999999999" fill="none" stroke="#2f7145" stroke-width="2.5" stroke-linecap="round" stroke-linejoin="round"/>
<polygon points="1920.60,1017.20 1931.86,1023.70 1931.86,1036.70 1920.60,1043.20 1909.34,1036.70 1909.34,1023.70" fill="none" stroke="#5e6ad2" stroke-width="2.7" stroke-linejoin="round"/>
<path d="M1915.6,1030.8 L1919.1999999999998,1034.2 L1925.8,1026.4" fill="none" stroke="#5e6ad2" stroke-width="2.6" stroke-linecap="round" stroke-linejoin="round"/>
<ellipse cx="2063" cy="1030.8" rx="7.1" ry="7.3" fill="#0e9637"/>
<ellipse cx="2125.4" cy="1030.8" rx="7.1" ry="7.3" fill="#d5a700"/>
<ellipse cx="2186.2" cy="1030.8" rx="7.1" ry="7.3" fill="#dc2e3c"/>
<ellipse cx="2247" cy="1030.8" rx="7.1" ry="7.3" fill="#606064"/>
<clipPath id="av6"><circle cx="1351.7" cy="1147.0" r="16.2"/></clipPath><g clip-path="url(#av6)"><rect x="1334.7" y="1130.0" width="34" height="34" fill="#8cc4a0"/><ellipse cx="1351.7" cy="1164.0" rx="15" ry="8.5" fill="#3c424a"/><rect x="1348.9" y="1151.0" width="5.6" height="6" fill="#d2a688"/><ellipse cx="1351.7" cy="1145.8" rx="6.8" ry="8.6" fill="#d2a688"/><path d="M1344.3,1144.5 Q1343.9,1134.5 1351.7,1134.8 Q1359.5,1134.5 1359.1000000000001,1144.5 Q1356.7,1138.8 1351.7,1138.8 Q1346.7,1138.8 1344.3,1144.5 Z" fill="#3a2a20"/></g>
<circle cx="1665.5" cy="1146.4" r="14" fill="none" stroke="#c6c6c8" stroke-width="1.2" stroke-dasharray="3 2.2"/>
<polygon points="1920.60,1132.80 1931.86,1139.30 1931.86,1152.30 1920.60,1158.80 1909.34,1152.30 1909.34,1139.30" fill="none" stroke="#5e6ad2" stroke-width="2.7" stroke-linejoin="round"/>
<path d="M1915.6,1146.4 L1919.1999999999998,1149.8000000000002 L1925.8,1142.0000000000002" fill="none" stroke="#5e6ad2" stroke-width="2.6" stroke-linecap="round" stroke-linejoin="round"/>
<clipPath id="av7"><circle cx="1351.7" cy="1252.6999999999998" r="16.2"/></clipPath><g clip-path="url(#av7)"><rect x="1334.7" y="1235.6999999999998" width="34" height="34" fill="#b49c5c"/><ellipse cx="1351.7" cy="1269.6999999999998" rx="15" ry="8.5" fill="#b04030"/><rect x="1348.9" y="1256.6999999999998" width="5.6" height="6" fill="#c08a6a"/><ellipse cx="1351.7" cy="1251.4999999999998" rx="6.8" ry="8.6" fill="#c08a6a"/><path d="M1344.3,1250.1999999999998 Q1343.9,1240.1999999999998 1351.7,1240.4999999999998 Q1359.5,1240.1999999999998 1359.1000000000001,1250.1999999999998 Q1356.7,1244.4999999999998 1351.7,1244.4999999999998 Q1346.7,1244.4999999999998 1344.3,1250.1999999999998 Z" fill="#3a4a5a"/></g>
<circle cx="1665.5" cy="1252.1" r="14" fill="none" stroke="#c6c6c8" stroke-width="1.2" stroke-dasharray="3 2.2"/>
<polygon points="1920.60,1238.50 1931.86,1245.00 1931.86,1258.00 1920.60,1264.50 1909.34,1258.00 1909.34,1245.00" fill="none" stroke="#5e6ad2" stroke-width="2.7" stroke-linejoin="round"/>
<path d="M1915.6,1252.1 L1919.1999999999998,1255.5 L1925.8,1247.7" fill="none" stroke="#5e6ad2" stroke-width="2.6" stroke-linecap="round" stroke-linejoin="round"/>
<path d="M703,1347.6 L713.7,1347.6 L708.4,1357 Z" fill="#98989b" stroke="#98989b" stroke-width="1" stroke-linejoin="round"/>
<clipPath id="av8"><circle cx="1351.7" cy="1382.1" r="16.2"/></clipPath><g clip-path="url(#av8)"><rect x="1334.7" y="1365.1" width="34" height="34" fill="#c8b8a0"/><ellipse cx="1351.7" cy="1399.1" rx="15" ry="8.5" fill="#2a4050"/><rect x="1348.9" y="1386.1" width="5.6" height="6" fill="#b08068"/><ellipse cx="1351.7" cy="1380.8999999999999" rx="6.8" ry="8.6" fill="#b08068"/><path d="M1344.3,1379.6 Q1343.9,1369.6 1351.7,1369.8999999999999 Q1359.5,1369.6 1359.1000000000001,1379.6 Q1356.7,1373.8999999999999 1351.7,1373.8999999999999 Q1346.7,1373.8999999999999 1344.3,1379.6 Z" fill="#2a2a2a"/></g>
<circle cx="1665.5" cy="1381.5" r="14" fill="none" stroke="#a8c4ae" stroke-width="1.2" stroke-dasharray="3 2.2"/>
<path d="M1657.2,1385.1 L1662.7,1378.9 L1668.3,1383.7 L1673.8,1377.1" fill="none" stroke="#2f7145" stroke-width="2.5" stroke-linecap="round" stroke-linejoin="round"/>
<polygon points="1920.60,1367.90 1931.86,1374.40 1931.86,1387.40 1920.60,1393.90 1909.34,1387.40 1909.34,1374.40" fill="none" stroke="#5e6ad2" stroke-width="2.7" stroke-linejoin="round"/>
<path d="M1915.6,1381.5 L1919.1999999999998,1384.9 L1925.8,1377.1000000000001" fill="none" stroke="#5e6ad2" stroke-width="2.6" stroke-linecap="round" stroke-linejoin="round"/>
<clipPath id="av9"><circle cx="1351.7" cy="1527.0" r="16.2"/></clipPath><g clip-path="url(#av9)"><rect x="1334.7" y="1510.0" width="34" height="34" fill="#6a96d4"/><path d="M1342.2,1538.0 Q1340.7,1524.0 1344.2,1517.0 L1346.7,1536.0 Z M1361.2,1538.0 Q1362.7,1524.0 1359.2,1517.0 L1356.7,1536.0 Z" fill="#d8b888"/><ellipse cx="1351.7" cy="1544.0" rx="15" ry="8.5" fill="#2a3a48"/><rect x="1348.9" y="1531.0" width="5.6" height="6" fill="#e2bca4"/><ellipse cx="1351.7" cy="1525.8" rx="6.8" ry="8.6" fill="#e2bca4"/><path d="M1344.3,1524.5 Q1343.9,1514.5 1351.7,1514.8 Q1359.5,1514.5 1359.1000000000001,1524.5 Q1356.7,1518.8 1351.7,1518.8 Q1346.7,1518.8 1344.3,1524.5 Z" fill="#d8b888"/></g>
<circle cx="1665.5" cy="1526.4" r="14" fill="none" stroke="#c6c6c8" stroke-width="1.2" stroke-dasharray="3 2.2"/>
<polygon points="1920.60,1512.80 1931.86,1519.30 1931.86,1532.30 1920.60,1538.80 1909.34,1532.30 1909.34,1519.30" fill="none" stroke="#5e6ad2" stroke-width="2.7" stroke-linejoin="round"/>
<path d="M1915.6,1526.4 L1919.1999999999998,1529.8000000000002 L1925.8,1522.0000000000002" fill="none" stroke="#5e6ad2" stroke-width="2.6" stroke-linecap="round" stroke-linejoin="round"/>
<clipPath id="av10"><circle cx="1351.7" cy="1661.6" r="16.2"/></clipPath><g clip-path="url(#av10)"><rect x="1334.7" y="1644.6" width="34" height="34" fill="#d4d4d4"/><ellipse cx="1351.7" cy="1678.6" rx="15" ry="8.5" fill="#1a1a1a"/><rect x="1348.9" y="1665.6" width="5.6" height="6" fill="#a8a8a8"/><ellipse cx="1351.7" cy="1660.3999999999999" rx="6.8" ry="8.6" fill="#a8a8a8"/><path d="M1344.3,1659.1 Q1343.9,1649.1 1351.7,1649.3999999999999 Q1359.5,1649.1 1359.1000000000001,1659.1 Q1356.7,1653.3999999999999 1351.7,1653.3999999999999 Q1346.7,1653.3999999999999 1344.3,1659.1 Z" fill="#303030"/></g>
<circle cx="1665.5" cy="1661" r="14" fill="none" stroke="#a8c4ae" stroke-width="1.2" stroke-dasharray="3 2.2"/>
<path d="M1657.2,1664.6 L1662.7,1658.4 L1668.3,1663.2 L1673.8,1656.6" fill="none" stroke="#2f7145" stroke-width="2.5" stroke-linecap="round" stroke-linejoin="round"/>
<polygon points="1920.60,1647.40 1931.86,1653.90 1931.86,1666.90 1920.60,1673.40 1909.34,1666.90 1909.34,1653.90" fill="none" stroke="#5e6ad2" stroke-width="2.7" stroke-linejoin="round"/>
<path d="M1915.6,1661.0 L1919.1999999999998,1664.4 L1925.8,1656.6000000000001" fill="none" stroke="#5e6ad2" stroke-width="2.6" stroke-linecap="round" stroke-linejoin="round"/>
<ellipse cx="2063" cy="1661" rx="7.1" ry="7.3" fill="#0e9637"/>
<ellipse cx="2125.4" cy="1661" rx="7.1" ry="7.3" fill="#dc2e3c"/>
<ellipse cx="2186.2" cy="1661" rx="7.1" ry="7.3" fill="#606064"/>
<circle cx="338.5" cy="426" r="23.5" fill="#fdf4e2"/>
<path d="M337.2,412.7 H340 L342,420.1 H335.1 Z M333.3,425.1 H343.9 L345.9,430.8 H331.5 Z M330.3,432.9 H346.6 L349,435.3 Q351.2,436.5 351.2,439 H325.9 Q325.9,436.5 328,435.3 Z" fill="#efbd00" stroke="#efbd00" stroke-width="0.6" stroke-linejoin="round"/>
<circle cx="338.5" cy="554.5" r="23.5" fill="#e4f3ea"/>
<path d="M351.3,542 C344,542.3 335.5,544.5 330.6,550.6 C327.4,554.6 326.2,558.3 325.9,561.2 C330.5,557.3 336,553.8 341.8,551.4 C337.2,555.4 333.6,561 331.3,567 C338.8,566.6 346,562.6 349.2,555.4 C351.2,550.8 351.4,546 351.3,542 Z" fill="#4cb883" transform="translate(0,0.0)"/>
<path d="M351.3,542 C344,542.3 335.5,544.5 330.6,550.6 C327.4,554.6 326.2,558.3 325.9,561.2 C330.5,557.3 336,553.8 341.8,551.4 C337.2,555.4 333.6,561 331.3,567 C338.8,566.6 346,562.6 349.2,555.4 C351.2,550.8 351.4,546 351.3,542 Z" fill="#4cb883" transform="translate(51.2,100.6)"/>
<g transform="translate(0,0)" fill="none" stroke="#1fb0cc" stroke-width="2.8" stroke-linecap="round" stroke-linejoin="round"><circle cx="382.4" cy="764.1" r="4.1"/><circle cx="396.9" cy="764.1" r="4.1"/><path d="M382.4,764.1 L385.8,756 H395.2 M385.4,760.2 L393.4,758.6 M382.8,752.6 Q385.5,752.6 387,754.6 M391.6,750.8 H395 Q395.6,750.8 395.6,752 V757.5 L396.9,764.1"/><circle cx="382.2" cy="764" r="0.6" fill="#1fb0cc"/><circle cx="396.9" cy="764" r="0.6" fill="#1fb0cc"/></g>
<g transform="translate(51,155.1)" fill="none" stroke="#edba00" stroke-width="2.8" stroke-linecap="round" stroke-linejoin="round"><circle cx="382.4" cy="764.1" r="4.1"/><circle cx="396.9" cy="764.1" r="4.1"/><path d="M382.4,764.1 L385.8,756 H395.2 M385.4,760.2 L393.4,758.6 M382.8,752.6 Q385.5,752.6 387,754.6 M391.6,750.8 H395 Q395.6,750.8 395.6,752 V757.5 L396.9,764.1"/><circle cx="382.2" cy="764" r="0.6" fill="#edba00"/><circle cx="396.9" cy="764" r="0.6" fill="#edba00"/></g>
<circle cx="338.5" cy="1021" r="23.5" fill="#e4f3ea"/>
<circle cx="338.55" cy="1020.45" r="12.7" fill="#4cb883"/>
<path d="M332.19,1009.9 L335.32,1011.1 L339.17,1013.51 L339.89,1014.47 L344.46,1016.87 L342.05,1020.24 L339.17,1022.65 L338.45,1025.05 L336.28,1027.22 L334.84,1029.86 L334.36,1028.66 L334.84,1023.85 L335.08,1020.72 L332.43,1016.39 L331.95,1014.47 L332.67,1012.3 Z M336.6,1030.2 L338.4,1030.6 L337.4,1031.8 Z" fill="#e4f3ea" stroke="#e4f3ea" stroke-width="0.6" stroke-linejoin="round"/>
<g transform="translate(0,0)"><path d="M380.6,1153.4 A10.8,10.8 0 1 1 398.2,1153.4" fill="none" stroke="#e8883a" stroke-width="2.7" stroke-linecap="round"/><path d="M389.4,1146.6 L396.2,1158.6 L389.4,1155.6 L382.6,1158.6 Z" fill="#e8883a" stroke="#e8883a" stroke-width="0.8" stroke-linejoin="round"/></g>
<g transform="translate(0,105.6)"><path d="M380.6,1153.4 A10.8,10.8 0 1 1 398.2,1153.4" fill="none" stroke="#e5484d" stroke-width="2.7" stroke-linecap="round"/><path d="M389.4,1146.6 L396.2,1158.6 L389.4,1155.6 L382.6,1158.6 Z" fill="#e5484d" stroke="#e5484d" stroke-width="0.8" stroke-linejoin="round"/></g>
<circle cx="338.5" cy="1357.5" r="23.5" fill="#fbe6e6"/>
<circle cx="338.55" cy="1357.6" r="12.65" fill="#e5534f"/>
<path d="M332.4,1358.3999999999999 C330.4,1357.3999999999999 327.79999999999995,1355.0 327.79999999999995,1352.3999999999999 C327.79999999999995,1350.2 330.0,1349.2 332.4,1351.2 C334.79999999999995,1349.2 337.0,1350.2 337.0,1352.3999999999999 C337.0,1355.0 334.4,1357.3999999999999 332.4,1358.3999999999999 Z" fill="#fbe6e6" transform="rotate(-18 332.4 1353.8)"/><path d="M344.7,1358.3999999999999 C342.7,1357.3999999999999 340.09999999999997,1355.0 340.09999999999997,1352.3999999999999 C340.09999999999997,1350.2 342.3,1349.2 344.7,1351.2 C347.09999999999997,1349.2 349.3,1350.2 349.3,1352.3999999999999 C349.3,1355.0 346.7,1357.3999999999999 344.7,1358.3999999999999 Z" fill="#fbe6e6" transform="rotate(18 344.7 1353.8)"/>
<path d="M335,1361.2 H342.1 Q342.1,1366.8 338.55,1366.8 Q335,1366.8 335,1361.2 Z" fill="#fbe6e6"/>
<path d="M389.55,1525 C385,1521.5 376.8,1515.5 376.8,1508 C376.8,1503 380.2,1499.2 383.8,1499.2 C386.4,1499.2 388.4,1500.6 389.55,1502.4 C390.7,1500.6 392.7,1499.2 395.3,1499.2 C398.9,1499.2 402.3,1503 402.3,1508 C402.3,1515.5 394.1,1521.5 389.55,1525 Z" fill="#e5534f"/>
<circle cx="338.5" cy="1646.6" r="23.5" fill="#e2f1e8"/>
<rect x="325.9" y="1633.7" width="25.3" height="16.4" rx="2.4" fill="#3eb67a"/>
<path d="M331.5,1636.4 H345.6 L348.6,1639.3 V1644.5 L345.6,1647.4 H331.5 L328.8,1644.5 V1639.3 Z" fill="#e2f1e8"/>
<circle cx="338.6" cy="1642" r="2.5" fill="#3eb67a"/>
<rect x="325.9" y="1652" width="25.3" height="2.9" rx="1.2" fill="#3eb67a"/><rect x="325.9" y="1657" width="25.3" height="2.5" rx="1.2" fill="#3eb67a"/>
<path d="M338,595 V746.4 C338,751.4 342,754.4 354.3,761.4 M338,646.2 C339.5,650.7 343,651.2 354.3,656.2" fill="none" stroke="#cbcbcb" stroke-width="1.8" stroke-linecap="round"/>
<path d="M388.7,795.2 V901.3 C388.7,906.3 392.7,909.3 405.0,916.3" fill="none" stroke="#cbcbcb" stroke-width="1.8" stroke-linecap="round"/>
<path d="M338,1056 V1237.4 C338,1242.4 342,1245.4 354.3,1252.4 M338,1137.3 C339.5,1141.8 343,1142.3 354.3,1147.3" fill="none" stroke="#cbcbcb" stroke-width="1.8" stroke-linecap="round"/>
<path d="M338,1392.4 V1497.6 C338,1502.6 342,1505.6 354.3,1512.6" fill="none" stroke="#cbcbcb" stroke-width="1.8" stroke-linecap="round"/>
</svg>
</div></body></html>
